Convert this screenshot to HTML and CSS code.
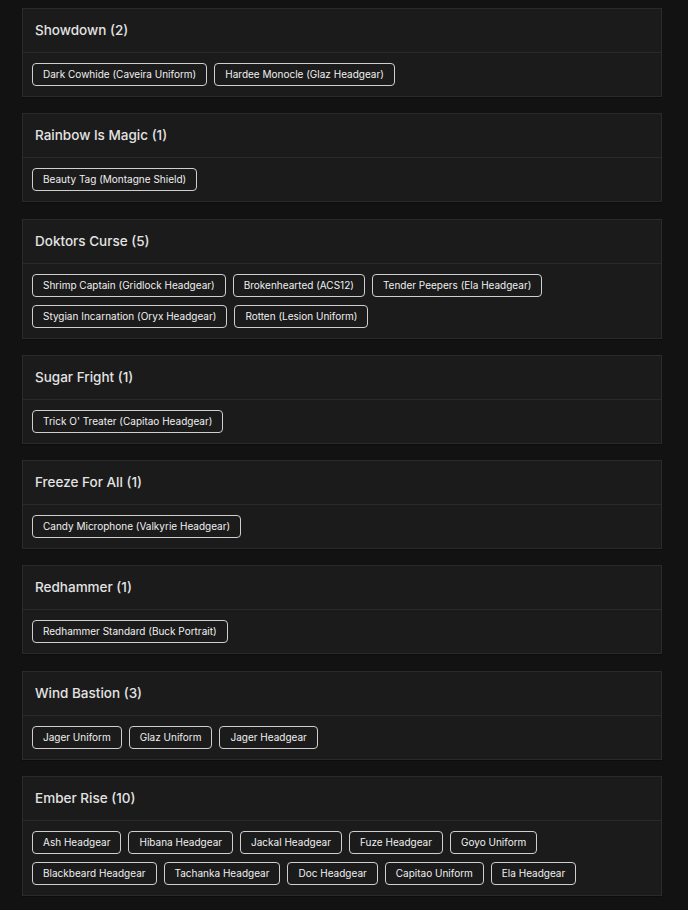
FILE: index.html
```html
<!DOCTYPE html>
<html lang="en">
<head>
	<meta charset="UTF-8">
	<meta name="viewport" content="width=device-width, initial-scale=1.0">
	<title>Event Items</title>
	<link rel="stylesheet" href="styles.css">
</head>

<body>
	<main class="events">
		<section class="event">
			<h3 class="event-title">Showdown (2)</h3>
			<div class="event-items">
				<span class="item">Dark Cowhide (Caveira Uniform)</span>
				<span class="item">Hardee Monocle (Glaz Headgear)</span>
			</div>
		</section>

		<section class="event">
			<h3 class="event-title">Rainbow Is Magic (1)</h3>
			<div class="event-items">
				<span class="item">Beauty Tag (Montagne Shield)</span>
			</div>
		</section>

		<section class="event">
			<h3 class="event-title">Doktors Curse (5)</h3>
			<div class="event-items">
				<span class="item">Shrimp Captain (Gridlock Headgear)</span>
				<span class="item">Brokenhearted (ACS12)</span>
				<span class="item">Tender Peepers (Ela Headgear)</span>
				<span class="item">Stygian Incarnation (Oryx Headgear)</span>
				<span class="item">Rotten (Lesion Uniform)</span>
			</div>
		</section>

		<section class="event">
			<h3 class="event-title">Sugar Fright (1)</h3>
			<div class="event-items">
				<span class="item">Trick O' Treater (Capitao Headgear)</span>
			</div>
		</section>

		<section class="event">
			<h3 class="event-title">Freeze For All (1)</h3>
			<div class="event-items">
				<span class="item">Candy Microphone (Valkyrie Headgear)</span>
			</div>
		</section>

		<section class="event">
			<h3 class="event-title">Redhammer (1)</h3>
			<div class="event-items">
				<span class="item">Redhammer Standard (Buck Portrait)</span>
			</div>
		</section>

		<section class="event">
			<h3 class="event-title">Wind Bastion (3)</h3>
			<div class="event-items">
				<span class="item">Jager Uniform</span>
				<span class="item">Glaz Uniform</span>
				<span class="item">Jager Headgear</span>
			</div>
		</section>

		<section class="event">
			<h3 class="event-title">Ember Rise (10)</h3>
			<div class="event-items">
				<span class="item">Ash Headgear</span>
				<span class="item">Hibana Headgear</span>
				<span class="item">Jackal Headgear</span>
				<span class="item">Fuze Headgear</span>
				<span class="item">Goyo Uniform</span>
				<span class="item">Blackbeard Headgear</span>
				<span class="item">Tachanka Headgear</span>
				<span class="item">Doc Headgear</span>
				<span class="item">Capitao Uniform</span>
				<span class="item">Ela Headgear</span>
			</div>
		</section>
	</main>
</body>
</html>
```

FILE: styles.css
```css
html, body {
	height: 100%;
}

body {
	margin: 0;
	background: #121212;
	color: #e6e6e6;
	font: 10px Inter, "Noto Sans", sans-serif;
	overflow: hidden;
}

.events {
	display: flex;
	flex-direction: column;
	gap: 16.3px;
	width: 640px;
	padding: 8px 0 0 22px;
}

.event {
	background: #1b1b1b;
	border: 1px solid #2a2a2a;
	box-shadow: 0 1px 0 #0c0c0c;
}

.event-title {
	height: 43px;
	margin: 0;
	padding: 0 12px;
	line-height: 43px;
	font-size: 13.5px;
	font-weight: 500;
	color: #e3e3e3;
	border-bottom: 1px solid #2a2a2a;
}

.event-items {
	display: flex;
	flex-wrap: wrap;
	gap: 8px 7px;
	padding: 10px 9px;
}

.item {
	height: 21px;
	padding: 0 10px;
	line-height: 21px;
	border: 1px solid #cfcfcf;
	border-radius: 4px;
	color: #f0f0f0;
}
```
